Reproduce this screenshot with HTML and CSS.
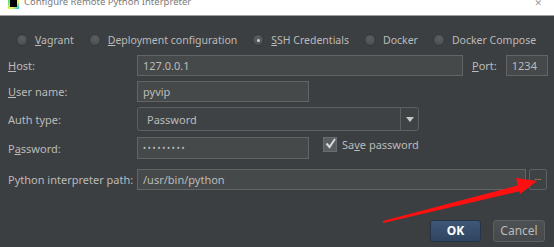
FILE: index.html
```html
<!DOCTYPE html>
<html>
<head>
<meta charset="utf-8">
<link rel="stylesheet" href="styles.css">
</head>
<body>
<div class="titlebar">
  <span class="app-icon"><span class="app-icon-inner"></span></span>
  <span class="title">Configure Remote Python Interpreter</span>
  <span class="close">&#x2715;</span>
</div>
<div class="dialog">
  <div class="radios">
    <label class="radio"><span class="dot"></span><span><u>V</u>agrant</span></label>
    <label class="radio"><span class="dot"></span><span><u>D</u>eployment configuration</span></label>
    <label class="radio"><span class="dot on"></span><span><u>S</u>SH Credentials</span></label>
    <label class="radio"><span class="dot"></span><span>Docker</span></label>
    <label class="radio"><span class="dot"></span><span>Docker Compose</span></label>
  </div>
  <div class="row r-host">
    <span class="lbl"><u>H</u>ost:</span>
    <span class="field f-host">127.0.0.1</span>
    <span class="port-lbl"><u>P</u>ort:</span>
    <span class="field f-port">1234</span>
  </div>
  <div class="row r-user">
    <span class="lbl"><u>U</u>ser name:</span>
    <span class="field f-short">pyvip</span>
  </div>
  <div class="row r-auth">
    <span class="lbl">Auth type:</span>
    <span class="combo"><span class="combo-text">Password</span><span class="combo-arrow"><span class="tri"></span></span></span>
  </div>
  <div class="row r-pass">
    <span class="lbl">P<u>a</u>ssword:</span>
    <span class="field f-short dots">•••••••••</span>
    <label class="check"><span class="box"><svg width="13" height="13" viewBox="0 0 13 13"><path d="M2.5 6.5 L5.5 10 L11 2" fill="none" stroke="#d8d8d8" stroke-width="2"/></svg></span><span>Sa<u>v</u>e password</span></label>
  </div>
  <div class="row r-path">
    <span class="lbl">Python interpreter path:</span>
    <span class="field f-path">/usr/bin/python</span>
    <span class="browse">...</span>
  </div>
  <div class="buttons">
    <span class="btn ok">OK</span>
    <span class="btn cancel">Cancel</span>
  </div>
  <svg class="arrow" width="554" height="247" viewBox="0 0 554 247">
    <path d="M383.2 223 L382.8 221 L519.3 185.1 L520.7 190.9 Z" fill="#ff1010"/>
    <path d="M537 181 L516 178 L520 194 Z" fill="#ff1010"/>
  </svg>
</div>
</body>
</html>
```
FILE: styles.css
```css
html, body {
  margin: 0;
  padding: 0;
  width: 554px;
  height: 247px;
  overflow: hidden;
  background: #3c3f41;
  font-family: "Noto Sans", "Open Sans", sans-serif;
  font-size: 11px;
  color: #bbbbbb;
}
u { text-decoration: underline; text-underline-offset: 1px; }

.titlebar {
  height: 15px;
  background: #ffffff;
  border-bottom: 1px solid #a0a0a0;
  display: flex;
  align-items: flex-start;
  position: relative;
  overflow: hidden;
}
.app-icon {
  width: 11px;
  height: 11px;
  margin: -2px 0 0 8px;
  background: linear-gradient(135deg, #21d789 0%, #fcf84a 60%, #07c3f2 100%);
  display: flex;
  align-items: center;
  justify-content: center;
}
.app-icon-inner {
  width: 7px;
  height: 7px;
  background: #000;
}
.title {
  margin: -5px 0 0 5px;
  font-size: 9.5px;
  line-height: 13px;
  color: #7a7a7a;
}
.close {
  margin: -3px 12px 0 auto;
  font-family: "DejaVu Sans", sans-serif;
  font-size: 9px;
  line-height: 12px;
  color: #999;
}

.dialog {
  position: relative;
  height: 231px;
  padding: 0 7px 0 8px;
  box-sizing: border-box;
}
.radios {
  display: flex;
  align-items: center;
  height: 16px;
  padding-top: 16px;
  margin-left: 8px;
  font-size: 10.5px;
}
.radio {
  display: flex;
  align-items: center;
  gap: 7px;
  margin-right: 15px;
  white-space: nowrap;
}
.dot {
  width: 10px;
  height: 10px;
  border-radius: 50%;
  background: radial-gradient(circle at 50% 35%, #5c5f61, #46494b);
  border: 1px solid #35383a;
  display: flex;
  align-items: center;
  justify-content: center;
}
.dot.on::after {
  content: "";
  width: 3px;
  height: 3px;
  border-radius: 50%;
  background: #cfcfcf;
}

.row {
  display: flex;
  align-items: center;
}
.lbl {
  width: 129px;
  flex: none;
  white-space: nowrap;
}
.field {
  flex: none;
  box-sizing: border-box;
  height: 21px;
  background: #45494a;
  border: 1px solid #646464;
  padding: 0 5px;
  line-height: 19px;
  color: #bbbbbb;
  white-space: nowrap;
}
.r-host { margin-top: 7px; }
.f-host { width: 326px; }
.port-lbl { margin: 0 9px 0 9px; flex: none; }
.f-port { width: 42px; }
.r-user { margin-top: 5px; }
.f-short { width: 172px; }
.r-auth { margin-top: 5px; }
.combo {
  box-sizing: border-box;
  width: 282px;
  height: 24px;
  border: 1px solid #5e6060;
  border-radius: 3px;
  background: #3e4244;
  display: flex;
  align-items: center;
}
.combo-text { flex: 1; padding-left: 9px; }
.combo-arrow {
  width: 17px;
  height: 22px;
  border-left: 1px solid #5e6060;
  display: flex;
  align-items: center;
  justify-content: center;
}
.tri {
  width: 0;
  height: 0;
  border-left: 4px solid transparent;
  border-right: 4px solid transparent;
  border-top: 5px solid #c8c8c8;
}
.r-pass { margin-top: 6px; height: 22px; }
.r-pass .field { height: 22px; }
.dots { font-size: 8px; letter-spacing: 1.8px; line-height: 19px; }
.check {
  display: flex;
  align-items: center;
  gap: 5px;
  margin-left: 14px;
  align-self: flex-start;
}
.box {
  width: 12px;
  height: 13px;
  background: #5a5d5f;
  border: 1px solid #6a6d6f;
  position: relative;
}
.box svg { position: absolute; left: 0; top: -1px; }
.r-path { margin-top: 10px; }
.f-path { width: 389px; }
.browse {
  box-sizing: border-box;
  width: 18px;
  height: 21px;
  margin-left: 3px;
  border: 1px solid #5e6060;
  border-radius: 2px;
  background: #3e4244;
  font-size: 8px;
  line-height: 14px;
  text-align: center;
  color: #bbb;
}
.buttons {
  display: flex;
  justify-content: flex-end;
  gap: 12px;
  margin-top: 30px;
  padding-right: 2px;
}
.btn {
  box-sizing: border-box;
  height: 22px;
  width: 52px;
  border-radius: 3px;
  text-align: center;
  line-height: 20px;
  font-size: 12px;
}
.ok {
  width: 51px;
  background: linear-gradient(#3f5878, #2f4460);
  border: 1px solid #253549;
  color: #ffffff;
  font-weight: bold;
}
.cancel {
  background: linear-gradient(#4d5153, #45494b);
  border: 1px solid #5c5f61;
  color: #bbbbbb;
}
.arrow {
  position: absolute;
  left: 0;
  top: -16px;
  pointer-events: none;
}
```
